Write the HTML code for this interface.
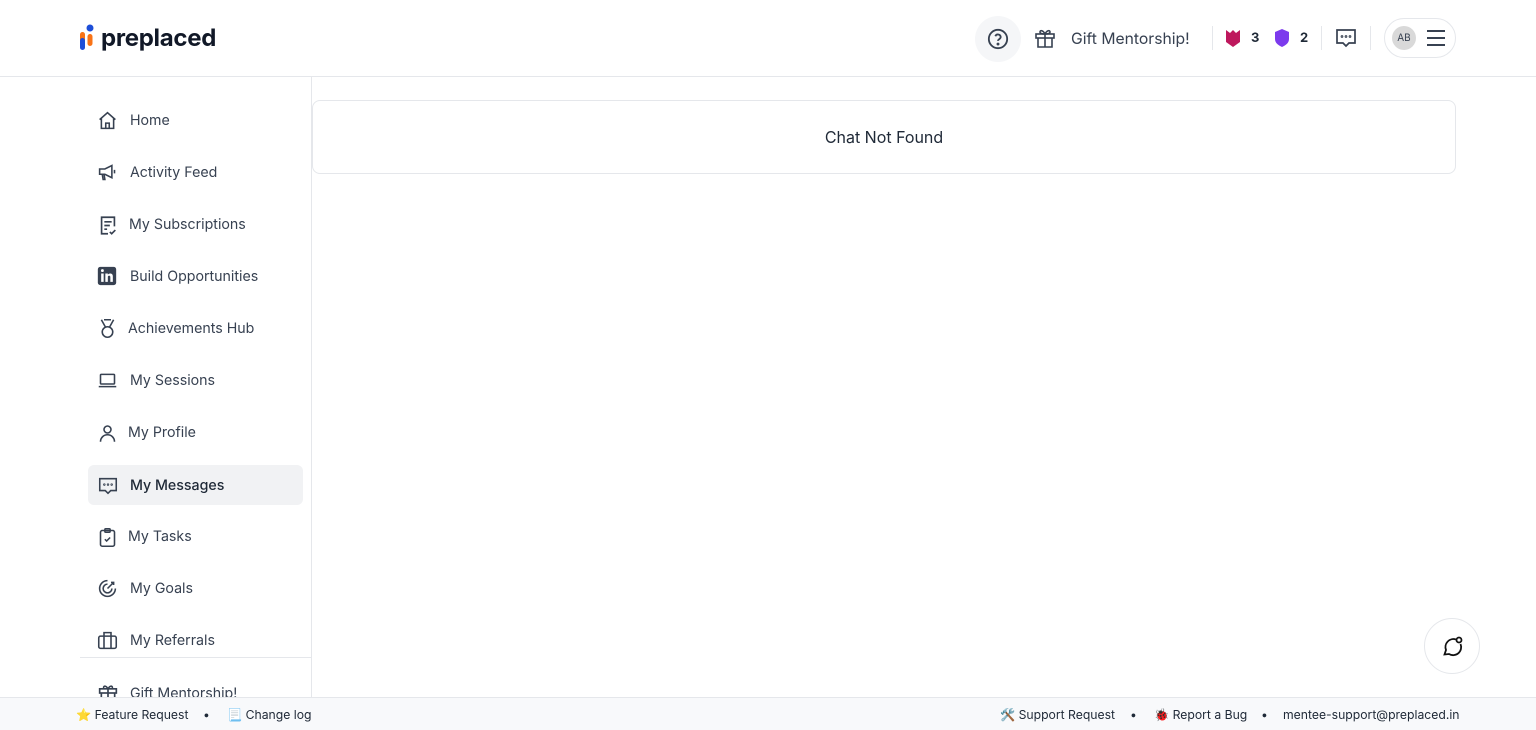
<!DOCTYPE html>
<html><head><meta charset="utf-8"><style>
*{box-sizing:border-box;margin:0;padding:0}
body{width:1536px;height:730px;overflow:hidden;background:#fff;font-family:"Inter","Liberation Sans",sans-serif;color:#1f2937;position:relative}
.hdr{position:absolute;left:0;top:0;width:1536px;height:77px;border-bottom:1px solid #e5e7eb}
.logo{position:absolute;left:80px;top:23px;font-weight:700;font-size:24px;color:#111827;letter-spacing:-0.3px}
.side{position:absolute;left:0;top:77px;width:312px;height:620px;border-right:1px solid #e5e7eb}
.item{position:absolute;left:88px;width:215px;height:40px;border-radius:6px;display:flex;align-items:center;font-size:14.2px;color:#374151}
.item svg{position:absolute;left:9px;top:10px}
.item span{position:absolute;left:42px;top:12px}
.active{background:#f1f2f4;color:#1f2937;font-weight:500}
.card{position:absolute;left:312px;top:100px;width:1144px;height:74px;border:1px solid #e5e7eb;border-radius:8px;text-align:center;line-height:72px;font-size:16px;color:#1f2937}
.foot{position:absolute;left:0;top:697px;width:1536px;height:33px;background:#f8f9fb;border-top:1px solid #e5e7eb;font-size:12.2px;color:#1f2937}
.foot span{position:absolute;top:9px;white-space:nowrap}
.sep{position:absolute;top:26px;width:1px;height:24px;background:#e5e7eb}
</style></head><body>
<div class="hdr">
 <svg style="position:absolute;left:79px;top:24px" width="16" height="27"><circle cx="11" cy="4" r="3.5" fill="#1d4ed8"/><rect x="1" y="8" width="5" height="10" rx="2.5" fill="#f97316"/><rect x="1" y="14" width="5" height="12" rx="2.5" fill="#1d4ed8"/><rect x="8.5" y="10" width="5" height="12" rx="2.5" fill="#f97316"/></svg>
 <div class="logo" style="left:101px">preplaced</div>
 <div style="position:absolute;left:975px;top:16px;width:46px;height:46px;border-radius:50%;background:#f5f6f8"></div>
 <svg style="position:absolute;left:987px;top:28px" width="22" height="22" viewBox="0 0 24 24" fill="none" stroke="#374151" stroke-width="2"><circle cx="12" cy="12" r="10"/><path d="M9.1 9a3 3 0 0 1 5.8 1c0 2-3 2.5-3 4"/><circle cx="12" cy="17.5" r=".6" fill="#374151"/></svg>
 <svg style="position:absolute;left:1033px;top:26px" width="24" height="24" viewBox="0 0 24 24" fill="none" stroke="#374151" stroke-width="1.6"><rect x="3" y="8" width="18" height="4"/><path d="M5 12v9h14v-9M12 8v13M12 8C10 4 7 4 7 6s3 2 5 2c2 0 5 0 5-2s-3-2-5 2"/></svg>
 <span style="position:absolute;left:1071px;top:29px;font-size:15.7px;color:#374151">Gift Mentorship!</span>
 <div class="sep" style="left:1212px"></div>
 <svg style="position:absolute;left:1225px;top:28px" width="16" height="20"><path d="M1 2l4 3 3-3 3 3 4-3v12l-7 5-7-5z" fill="#be185d"/></svg>
 <span style="position:absolute;left:1251px;top:30px;font-size:13px;font-weight:700;color:#1f2937">3</span>
 <svg style="position:absolute;left:1274px;top:28px" width="16" height="20"><path d="M8 1l7 3v7c0 4-3 6-7 8-4-2-7-4-7-8V4z" fill="#7c3aed"/></svg>
 <span style="position:absolute;left:1300px;top:30px;font-size:13px;font-weight:700;color:#1f2937">2</span>
 <div class="sep" style="left:1321px"></div>
 <svg style="position:absolute;left:1334px;top:26px" width="24" height="24" viewBox="0 0 24 24" fill="none" stroke="#374151" stroke-width="1.7"><path d="M3 4h18v13h-6l-3 3-3-3H3z"/><circle cx="8" cy="10.5" r=".5"/><circle cx="12" cy="10.5" r=".5"/><circle cx="16" cy="10.5" r=".5"/></svg>
 <div class="sep" style="left:1370px"></div>
 <div style="position:absolute;left:1384px;top:18px;width:72px;height:40px;border:1px solid #e5e7eb;border-radius:20px"></div>
 <div style="position:absolute;left:1392px;top:26px;width:24px;height:24px;border-radius:50%;background:#d9d9d9;font-size:10px;line-height:24px;text-align:center;color:#374151">AB</div>
 <svg style="position:absolute;left:1426px;top:29px" width="20" height="18" stroke="#374151" stroke-width="2"><path d="M1 2h18M1 9h18M1 16h18"/></svg>
</div>
<div class="side">
 <div style="position:absolute;left:80px;top:580px;width:232px;height:1px;background:#e5e7eb"></div>
</div>
<div class="item" style="top:100px"><svg width="21" height="21" viewBox="0 0 24 24" fill="none" stroke="#374151" stroke-width="1.8"><path d="M3 11l9-8 9 8M5 9v12h14V9M10 21v-6h4v6"/></svg><span>Home</span></div>
<div class="item" style="top:152px"><svg width="21" height="21" viewBox="0 0 24 24" fill="none" stroke="#374151" stroke-width="1.8"><path d="M3 8h6l8-4v14l-8-4H3zM6 14l1 6h2l-1-6M20 9v4"/></svg><span>Activity Feed</span></div>
<div class="item" style="top:204px"><svg width="22" height="23" viewBox="0 0 24 24" fill="none" stroke="#374151" stroke-width="1.8"><path d="M12 21H5V3h14v10M8 8h8M8 12h6M8 16h3M14 19l2 2 4-4"/></svg><span style="left:41px">My Subscriptions</span></div>
<div class="item" style="top:256px"><svg width="20" height="20" viewBox="0 0 24 24"><rect x="1" y="1" width="22" height="22" rx="3" fill="#374151"/><path d="M5 9h3v10H5zM10 9h3v1.5c1-2 6-2.5 6 2V19h-3v-6c0-2-3-2-3 0v6h-3z" fill="#fff"/><circle cx="6.5" cy="5.5" r="1.7" fill="#fff"/></svg><span>Build Opportunities</span></div>
<div class="item" style="top:308px"><svg width="21" height="21" viewBox="0 0 24 24" fill="none" stroke="#374151" stroke-width="1.8"><path d="M5 2l5 9M19 2l-5 9M8 2h8"/><circle cx="12" cy="16" r="6"/></svg><span style="left:40px">Achievements Hub</span></div>
<div class="item" style="top:360px"><svg width="21" height="21" viewBox="0 0 24 24" fill="none" stroke="#374151" stroke-width="1.8"><rect x="4" y="5" width="16" height="11" rx="1"/><path d="M2 19h20"/></svg><span>My Sessions</span></div>
<div class="item" style="top:412px"><svg width="21" height="22" viewBox="0 0 24 24" fill="none" stroke="#374151" stroke-width="1.8"><circle cx="12" cy="8" r="4"/><path d="M4 22c0-5 4-8 8-8s8 3 8 8"/></svg><span style="left:40px">My Profile</span></div>
<div class="item active" style="top:465px"><svg width="22" height="22" viewBox="0 0 24 24" fill="none" stroke="#374151" stroke-width="1.7"><path d="M3 4h18v13h-6l-3 3-3-3H3z"/><circle cx="8" cy="10.5" r=".5"/><circle cx="12" cy="10.5" r=".5"/><circle cx="16" cy="10.5" r=".5"/></svg><span>My Messages</span></div>
<div class="item" style="top:516px"><svg width="21" height="23" viewBox="0 0 24 24" fill="none" stroke="#374151" stroke-width="1.8"><rect x="4" y="4" width="16" height="18" rx="2"/><rect x="9" y="2" width="6" height="4" rx="1"/><path d="M9 14l2 2 4-4"/></svg><span style="left:40px">My Tasks</span></div>
<div class="item" style="top:568px"><svg width="21" height="21" viewBox="0 0 24 24" fill="none" stroke="#374151" stroke-width="1.8"><path d="M21 12a9 9 0 1 1-9-9M17 12a5 5 0 1 1-5-5M12 12l7-7M16 5h3v3"/></svg><span>My Goals</span></div>
<div class="item" style="top:620px"><svg width="21" height="21" viewBox="0 0 24 24" fill="none" stroke="#374151" stroke-width="1.8"><rect x="2" y="7" width="20" height="14" rx="2"/><path d="M8 7V3h8v4M8 7v14M16 7v14"/></svg><span>My Referrals</span></div>
<div class="item" style="top:673px;height:24px;overflow:hidden;align-items:flex-start"><svg style="top:10px" width="22" height="20" viewBox="0 0 24 24" fill="none" stroke="#374151" stroke-width="2"><rect x="2" y="7" width="20" height="5"/><path d="M4 12v9h16v-9M12 7v14M12 7C9 2 6 4 7 6M12 7c3-5 6-3 5-1"/></svg><span style="top:12px">Gift Mentorship!</span></div>
<div class="card">Chat Not Found</div>
<div style="position:absolute;left:1424px;top:618px;width:56px;height:56px;border-radius:50%;border:1px solid #e5e7eb;background:#fff"></div>
<svg style="position:absolute;left:1441px;top:635px" width="24" height="24" viewBox="0 0 24 24" fill="none" stroke="#111" stroke-width="1.8"><path d="M15 4.5A8 8 0 0 0 5 15l-1.5 4.5 4.5-.5A8 8 0 0 0 19.5 9"/><circle cx="18" cy="5" r="2.5"/></svg>
<div class="foot">
 <span style="left:76px">⭐ Feature Request</span>
 <span style="left:203px">•</span>
 <span style="left:227px">📃 Change log</span>
 <span style="left:1000px">🛠️ Support Request</span>
 <span style="left:1130px">•</span>
 <span style="left:1154px">🐞 Report a Bug</span>
 <span style="left:1261px">•</span>
 <span style="left:1283px">mentee-support@preplaced.in</span>
</div>
</body></html>
